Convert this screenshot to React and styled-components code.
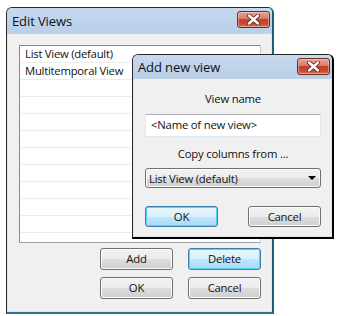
import React from "react";
import styled, { createGlobalStyle } from "styled-components";

const Global = createGlobalStyle`
  html, body { margin: 0; padding: 0; background: #ffffff; }
  body { width: 337px; height: 316px; overflow: hidden; font-family: "Open Sans", "Noto Sans", sans-serif; }
`;

const Desktop = styled.div`
  position: relative;
  width: 337px;
  height: 316px;
  background: #ffffff;
`;

const Window = styled.div`
  position: absolute;
  left: ${(p) => p.$x}px;
  top: ${(p) => p.$y}px;
  width: ${(p) => p.$w}px;
  height: ${(p) => p.$h}px;
  box-sizing: border-box;
  display: flex;
  flex-direction: column;
  background: #f0f0f0;
  border: 1px solid #2a2a2a;
  border-right: 2px solid ${(p) => (p.$shadow ? "#000" : "#1f5e78")};
  border-bottom: 2px solid ${(p) => (p.$shadow ? "#000" : "#2a7590")};
  border-radius: 6px 6px 0 0;
  box-shadow: inset 1px 0 0 #dbe6f2, inset -1px 0 0 #dbe6f2, inset 0 -1px 0 #dbe6f2;
  overflow: hidden;
`;

const TitleBar = styled.div`
  height: ${(p) => p.$h}px;
  flex: none;
  display: flex;
  align-items: center;
  justify-content: space-between;
  padding: 0 2px 0 5px;
  background: linear-gradient(#c6d9ee, #b9cfe8);
  border-bottom: 1px solid #c5d4e4;
`;

const Title = styled.span`
  font-family: "Open Sans", "Noto Sans", sans-serif;
  font-size: 13px;
  color: #111;
  letter-spacing: -0.1px;
`;

const CloseButton = styled.div`
  width: 33px;
  height: 17px;
  box-sizing: border-box;
  border: 1px solid #6e2a1e;
  border-radius: 3px;
  background: linear-gradient(#e6a597 0%, #d67a66 45%, #c0432c 50%, #c44a31 80%, #d6775f 100%);
  box-shadow: inset 0 0 0 1px rgba(255, 220, 210, 0.45);
  display: flex;
  align-items: center;
  justify-content: center;
  align-self: ${(p) => p.$align || "center"};
  margin-top: ${(p) => p.$mt || 0}px;
`;

const Body = styled.div`
  flex: 1;
  display: flex;
  flex-direction: column;
  padding: ${(p) => p.$pad};
`;

const ListBox = styled.div`
  width: 242px;
  height: 198px;
  box-sizing: border-box;
  border: 1px solid #828790;
  border-right-color: #c9ccd2;
  border-bottom-color: #9ea2a8;
  background: #ffffff;
  display: flex;
  flex-direction: column;
  overflow: hidden;
`;

const ListRow = styled.div`
  height: 17px;
  flex: none;
  box-sizing: border-box;
  border-bottom: 1px solid #ececec;
  padding-left: 5px;
  font-size: 11.3px;
  letter-spacing: -0.25px;
  line-height: 16px;
  color: #111;
  white-space: nowrap;
`;

const ButtonGrid = styled.div`
  display: grid;
  grid-template-columns: 73px 73px;
  column-gap: 15px;
  row-gap: 7px;
  justify-content: end;
  margin-top: ${(p) => p.$mt}px;
`;

const Button = styled.div`
  width: 73px;
  height: ${(p) => p.$h || 22}px;
  box-sizing: border-box;
  border: 1px solid ${(p) => (p.$focus ? "#3c7fb1" : "#707070")};
  border-radius: 3px;
  background: ${(p) =>
    p.$focus
      ? "linear-gradient(#eaf6fd 0%, #d9f0fc 50%, #bee6fd 51%, #a7d9f5 100%)"
      : "linear-gradient(#f2f2f2 0%, #ebebeb 50%, #dddddd 51%, #cfcfcf 100%)"};
  box-shadow: ${(p) => (p.$focus ? "inset 0 0 0 1px #5fd0f5" : "inset 0 0 0 1px #fcfcfc")};
  display: flex;
  align-items: center;
  justify-content: center;
  padding-bottom: 1px;
  font-size: 11.3px;
  letter-spacing: -0.2px;
  color: #111;
`;

const Label = styled.div`
  text-align: center;
  font-size: 11.3px;
  letter-spacing: -0.2px;
  color: #111;
  height: 16px;
  line-height: 16px;
  margin-top: ${(p) => p.$mt}px;
`;

const TextInput = styled.div`
  height: 23px;
  box-sizing: border-box;
  margin-top: ${(p) => p.$mt}px;
  border: 1px solid #e3e9ef;
  border-top-color: #abadb3;
  background: #fff;
  font-size: 11.3px;
  letter-spacing: -0.2px;
  line-height: 20px;
  padding-left: 5px;
  color: #111;
`;

const Select = styled.div`
  height: 20px;
  box-sizing: border-box;
  margin-top: ${(p) => p.$mt}px;
  border: 1px solid #707070;
  border-radius: 3px;
  background: linear-gradient(#f2f2f2 0%, #ebebeb 50%, #dddddd 51%, #cfcfcf 100%);
  box-shadow: inset 0 0 0 1px #fcfcfc;
  display: flex;
  align-items: center;
  justify-content: space-between;
  padding: 0 4px 0 3px;
  font-size: 11.3px;
  letter-spacing: -0.2px;
  color: #111;
`;

const Arrow = styled.span`
  width: 0;
  height: 0;
  border-left: 4px solid transparent;
  border-right: 4px solid transparent;
  border-top: 4px solid #000;
`;

const DialogButtons = styled.div`
  display: flex;
  justify-content: space-between;
  margin-top: ${(p) => p.$mt}px;
`;

const CloseX = () => (
  <svg width="13" height="11" viewBox="0 0 13 11">
    <path d="M2 1.5 L11 9.5 M11 1.5 L2 9.5" stroke="#5a2018" strokeWidth="4" strokeLinecap="round" />
    <path d="M2 1.5 L11 9.5 M11 1.5 L2 9.5" stroke="#ffffff" strokeWidth="2.4" strokeLinecap="round" />
  </svg>
);

const rows = ["List View (default)", "Multitemporal View", "", "", "", "", "", "", "", "", "", ""];

export default function App() {
  return (
    <Desktop>
      <Global />
      <Window $x={6} $y={7} $w={268} $h={307}>
        <TitleBar $h={25}>
          <Title>Edit Views</Title>
          <CloseButton $align="flex-start" $mt={3}>
            <CloseX />
          </CloseButton>
        </TitleBar>
        <Body $pad="11px 11px 0 12px">
          <ListBox>
            {rows.map((r, i) => (
              <ListRow key={i}>{r}</ListRow>
            ))}
          </ListBox>
          <ButtonGrid $mt={5}>
            <Button>Add</Button>
            <Button $focus>Delete</Button>
            <Button>OK</Button>
            <Button>Cancel</Button>
          </ButtonGrid>
        </Body>
      </Window>
      <Window $x={132} $y={54} $w={202} $h={185} $shadow>
        <TitleBar $h={23}>
          <Title>Add new view</Title>
          <CloseButton>
            <CloseX />
          </CloseButton>
        </TitleBar>
        <Body $pad="0 11px 0 12px">
          <Label $mt={12}>View name</Label>
          <TextInput $mt={7}>&lt;Name of new view&gt;</TextInput>
          <Label $mt={9}>Copy columns from ...</Label>
          <Select $mt={6}>
            <span>List View (default)</span>
            <Arrow />
          </Select>
          <DialogButtons $mt={18}>
            <Button $focus $h={21}>OK</Button>
            <Button $h={21}>Cancel</Button>
          </DialogButtons>
        </Body>
      </Window>
    </Desktop>
  );
}
